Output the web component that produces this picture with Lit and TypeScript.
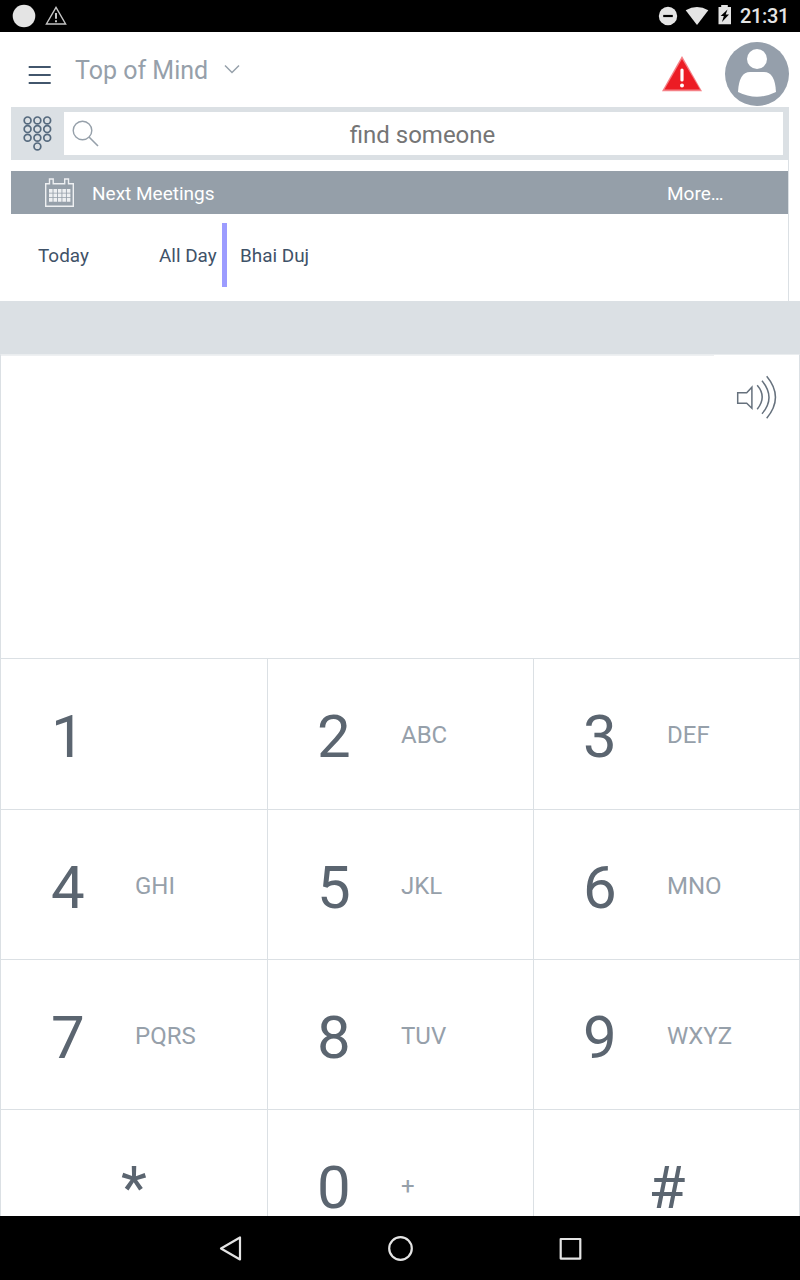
import { LitElement, html, css, svg } from "lit";
import { customElement } from "lit/decorators.js";

const KEYS: [string, string][] = [
  ["1", ""], ["2", "ABC"], ["3", "DEF"],
  ["4", "GHI"], ["5", "JKL"], ["6", "MNO"],
  ["7", "PQRS"], ["8", "TUV"], ["9", "WXYZ"],
  ["*", ""], ["0", "+"], ["#", ""],
];

const dots = [0, 1, 2].flatMap((r) => [0, 1, 2].map((c) => [4.6 + c * 9.8, 4.4 + r * 8.7]));
dots.push([14.4, 30.4]);

@customElement("app-root")
export class AppRoot extends LitElement {
  static styles = css`
    :host {
      display: flex;
      flex-direction: column;
      width: 800px;
      height: 1280px;
      overflow: hidden;
      background: #fff;
      font-family: Roboto, sans-serif;
      color: #3f5268;
    }
    * { box-sizing: border-box; }
    svg { display: block; flex: none; }
    .status { flex: none; display: flex; align-items: center; color: #e4e4e4; height: 32px; background: #000; padding-right: 11px; }
    .clock { font-size: 20px; font-weight: 500; line-height: 32px; margin-left: 8px; letter-spacing: -0.35px; }
    .spacer { flex: 1; }
    .header { flex: none; height: 75px; display: flex; align-items: flex-start; padding-left: 28px; }
    .burger { margin-top: 33px; }
    .title { font-size: 25px; line-height: 32px; color: #96a0aa; margin: 23px 0 0 24px; width: 149px; white-space: nowrap; }
    .chev { margin-top: 32px; }
    .alert { margin-top: 23px; }
    .avatar { margin: 10px 11px 0 22px; }
    .search { flex: none; height: 53px; margin: 0 11px; background: #dbe0e4; padding: 5px 6px 5px 5px; display: flex; }
    .pad { margin: 4px 12px 0 7px; }
    .field { flex: 1; background: #fff; height: 43px; display: flex; padding-left: 8px; margin-left: -1px; }
    .lens { margin-top: 8px; }
    .query { flex: 1; margin-right: 38px; text-align: center; font-size: 24px; line-height: 46px; color: #757575; }
    .meetings { flex: none; margin: 0 11px; height: 141px; border-right: 1px solid #dbe0e4; padding-top: 11px; }
    .bar { height: 43px; background: #959fa9; display: flex; color: #fff; font-size: 19px; line-height: 45px; padding-left: 33px; }
    .cal { margin-top: 6px; }
    .barTitle { margin-left: 17px; flex: 1; }
    .more { width: 121px; }
    .event { display: flex; margin-top: 9px; height: 64px; line-height: 65px; font-size: 18.9px; padding-left: 27px; }
    .day { width: 121px; }
    .time { width: 63px; }
    .mark { width: 5px; background: #9c9cff; margin-right: 13px; }
    .band { flex: none; height: 53px; background: #dbe0e4; }
    .panel { flex: none; height: 304px; border: 1px solid #dbe0e4; border-top-color: #eaedef; border-bottom: 0; display: flex; justify-content: flex-end; padding: 0 21px 0 0; }
    .edge { height: 1px; flex: 1; background: #eef0f2; margin-right: 22px; }
    .speaker { margin-top: 20px; }
    .keys { flex: 1; min-height: 0; overflow: hidden; display: grid; grid-template-columns: 268px 266px 266px; grid-template-rows: 151px 150px 150px minmax(0, 1fr); }
    .key { border-top: 1px solid #dbe0e4; border-right: 1px solid #dbe0e4; display: flex; align-items: flex-start; padding-left: 49px; }
    .key:nth-child(3n + 1) { border-left: 1px solid #dbe0e4; padding-left: 50px; }
    .num { font-size: 60px; color: #5b6570; width: 84px; margin-top: 51px; line-height: 54px; }
    .sub { font-size: 24px; color: #96a0aa; margin-top: 62px; line-height: 28px; }
    .key.solo { padding-left: 1px; justify-content: center; }
    .key.solo:nth-child(3n + 1) { padding-left: 0; }
    .solo .num { width: auto; }
    .nav { flex: none; height: 64px; background: #000; display: flex; justify-content: center; }
  `;

  render() {
    return html`
      <div class="status">
        <svg width="80" height="32">
          <circle cx="24" cy="16" r="11.3" fill="#e4e4e4" />
          <path d="M56 7.3 65.6 24H46.4Z" fill="none" stroke="#c4c4c4" stroke-width="1.4" />
          <path d="M56 13v5.8M56 20.3v2" stroke="#c4c4c4" stroke-width="2" />
        </svg>
        <span class="spacer"></span>
        <svg width="76" height="32" viewBox="656 0 76 32">
          <circle cx="668" cy="16" r="9.2" fill="#e4e4e4" />
          <path d="M663.2 16h9.6" stroke="#000" stroke-width="2.2" />
          <path d="M685.7 10.2Q697 3.6 708.3 10.2L697 25Z" fill="#e4e4e4" />
          <path d="M718.5 7h2.7V5h6.6v2h3.2v17.2h-12.5Z" fill="#e4e4e4" />
          <path d="M727.5 9.5 720.6 16h3.2l-1.8 6 7-7.5h-3.3Z" fill="#000" />
        </svg>
        <span class="clock">21:31</span>
      </div>
      <div class="header">
        <svg class="burger" width="23" height="20"><path d="M.7 2h22M.7 10h22M.7 18h22" stroke="#42566c" stroke-width="2" /></svg>
        <div class="title">Top of Mind</div>
        <svg class="chev" width="16" height="12"><path d="m1 1.5 7 7 7-7" fill="none" stroke="#96a0aa" stroke-width="1.5" /></svg>
        <span class="spacer"></span>
        <svg class="alert" width="42" height="38">
          <path d="M21 1 41 36.3H1Z" fill="#f58086" />
          <path d="M21 4 39 34.5H3.5Z" fill="#ec1c24" />
          <path d="M21 15v10" stroke="#fff" stroke-width="3.2" stroke-linecap="round" />
          <circle cx="21" cy="30.5" r="2" fill="#fff" />
        </svg>
        <svg class="avatar" width="64" height="64">
          <circle cx="32" cy="32" r="32" fill="#959fab" />
          <circle cx="32" cy="17" r="10" fill="#fff" />
          <path d="M13 50Q14 30 25 30H39Q50 30 51 50Q32 59.5 13 50Z" fill="#fff" />
        </svg>
      </div>
      <div class="search">
        <svg class="pad" width="30" height="38">
          ${dots.map(([x, y]) => svg`<circle cx=${x} cy=${y} r="3.4" fill="none" stroke="#566a7e" stroke-width="1.7" />`)}
        </svg>
        <div class="field">
          <svg class="lens" width="28" height="28"><circle cx="10.5" cy="10.5" r="9.3" fill="none" stroke="#96a0aa" stroke-width="1.4" /><path d="m17 17 9 9" stroke="#96a0aa" stroke-width="1.6" /></svg>
          <div class="query">find someone</div>
        </div>
      </div>
      <div class="meetings">
        <div class="bar">
          <svg class="cal" width="31" height="31" fill="none" stroke="#eef0f2">
            <path d="M1.7 29.3V6.7H5.5V2H9.2V6.7H20.7V2H24.5V6.7H29.3V29.3Z" stroke-width="1.4" />
            ${[13.9, 18.4, 22.9].map((y) => svg`<path d=${`M5 ${y}h21.5`} stroke-width="3.6" stroke-dasharray="3.6 .85" />`)}
          </svg>
          <span class="barTitle">Next Meetings</span><span class="more">More…</span>
        </div>
        <div class="event"><span class="day">Today</span><span class="time">All Day</span><span class="mark"></span><span>Bhai Duj</span></div>
      </div>
      <div class="band"></div>
      <div class="panel">
        <span class="edge"></span>
        <svg class="speaker" width="42" height="46" fill="none" stroke="#66717d" stroke-width="1.5" viewBox="736.3 375.3 42 46">
          <path d="M738 393h9l5.2-5.5v21l-5.2-5h-9ZM757.5 385.5q10 11.5 0 24M762.3 381q14 17 0 33M767 376.5q17.5 21 0 42" />
        </svg>
      </div>
      <div class="keys">
        ${KEYS.map(([n, s]) => html`<div class="key ${n === "*" || n === "#" ? "solo" : ""}"><span class="num">${n}</span>${s ? html`<span class="sub">${s}</span>` : ""}</div>`)}
      </div>
      <div class="nav">
        <svg width="400" height="64" viewBox="200 1216 400 64" fill="none" stroke="#e4e4e4" stroke-width="2.2" stroke-linejoin="round">
          <path d="M240 1237.5v22L221 1248.5Z" /><circle cx="400.5" cy="1248.5" r="11.3" /><rect x="560.7" y="1239" width="19.6" height="19.6" />
        </svg>
      </div>
    `;
  }
}
